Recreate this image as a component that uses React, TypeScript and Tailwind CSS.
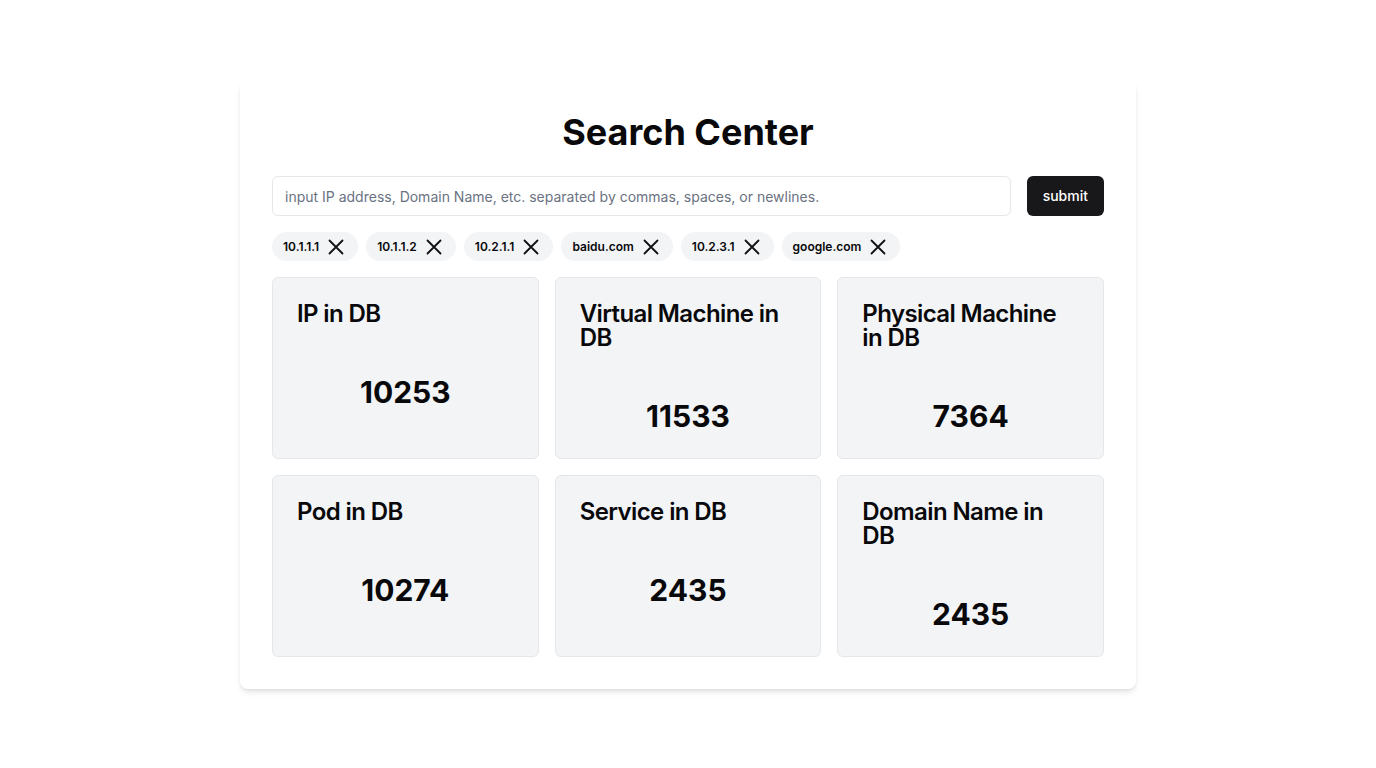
import React from "react";

const chips = ["10.1.1.1", "10.1.1.2", "10.2.1.1", "baidu.com", "10.2.3.1", "google.com"];
const stats = [
  { title: "IP in DB", value: "10253" },
  { title: "Virtual Machine in DB", value: "11533" },
  { title: "Physical Machine in DB", value: "7364" },
  { title: "Pod in DB", value: "10274" },
  { title: "Service in DB", value: "2435" },
  { title: "Domain Name in DB", value: "2435" },
];

function XIcon() {
  return (
    <svg width="16" height="16" viewBox="0 0 16 16" fill="none" stroke="#111" strokeWidth="1.8" strokeLinecap="round">
      <path d="M1.5 1.5 L14.5 14.5 M14.5 1.5 L1.5 14.5" />
    </svg>
  );
}

export default function App() {
  return (
    <div className="min-h-screen bg-white pt-20 text-[#09090b]" style={{ fontFamily: "Inter, 'Noto Sans', sans-serif" }}>
      <div className="mx-auto w-[896px] rounded-lg bg-white p-8 shadow-md">
        <h1 className="mb-6 text-center text-4xl font-bold leading-10">Search Center</h1>
        <div className="flex items-center gap-4">
          <input
            className="h-10 flex-1 rounded-md border border-gray-200 px-3 text-sm outline-none placeholder:text-gray-500"
            placeholder="input IP address, Domain Name, etc. separated by commas, spaces, or newlines."
          />
          <button className="h-10 rounded-md bg-[#18181b] px-4 text-sm font-medium text-white">submit</button>
        </div>
        <div className="mt-4 flex flex-wrap gap-2">
          {chips.map((c) => (
            <div key={c} className="flex h-[29px] items-center gap-[9px] rounded-full bg-gray-100 pl-[11px] pr-[14px] text-xs font-semibold">
              <span>{c}</span>
              <XIcon />
            </div>
          ))}
        </div>
        <div className="mt-4 grid grid-cols-3 gap-4">
          {stats.map((s) => (
            <div key={s.title} className="rounded-md border border-gray-200 bg-gray-100">
              <div className="p-6">
                <h3 className="text-2xl font-semibold leading-none tracking-tight">{s.title}</h3>
              </div>
              <div className="px-6 pb-6">
                <div className="mt-6 text-center text-3xl font-bold leading-9">{s.value}</div>
              </div>
            </div>
          ))}
        </div>
      </div>
    </div>
  );
}
